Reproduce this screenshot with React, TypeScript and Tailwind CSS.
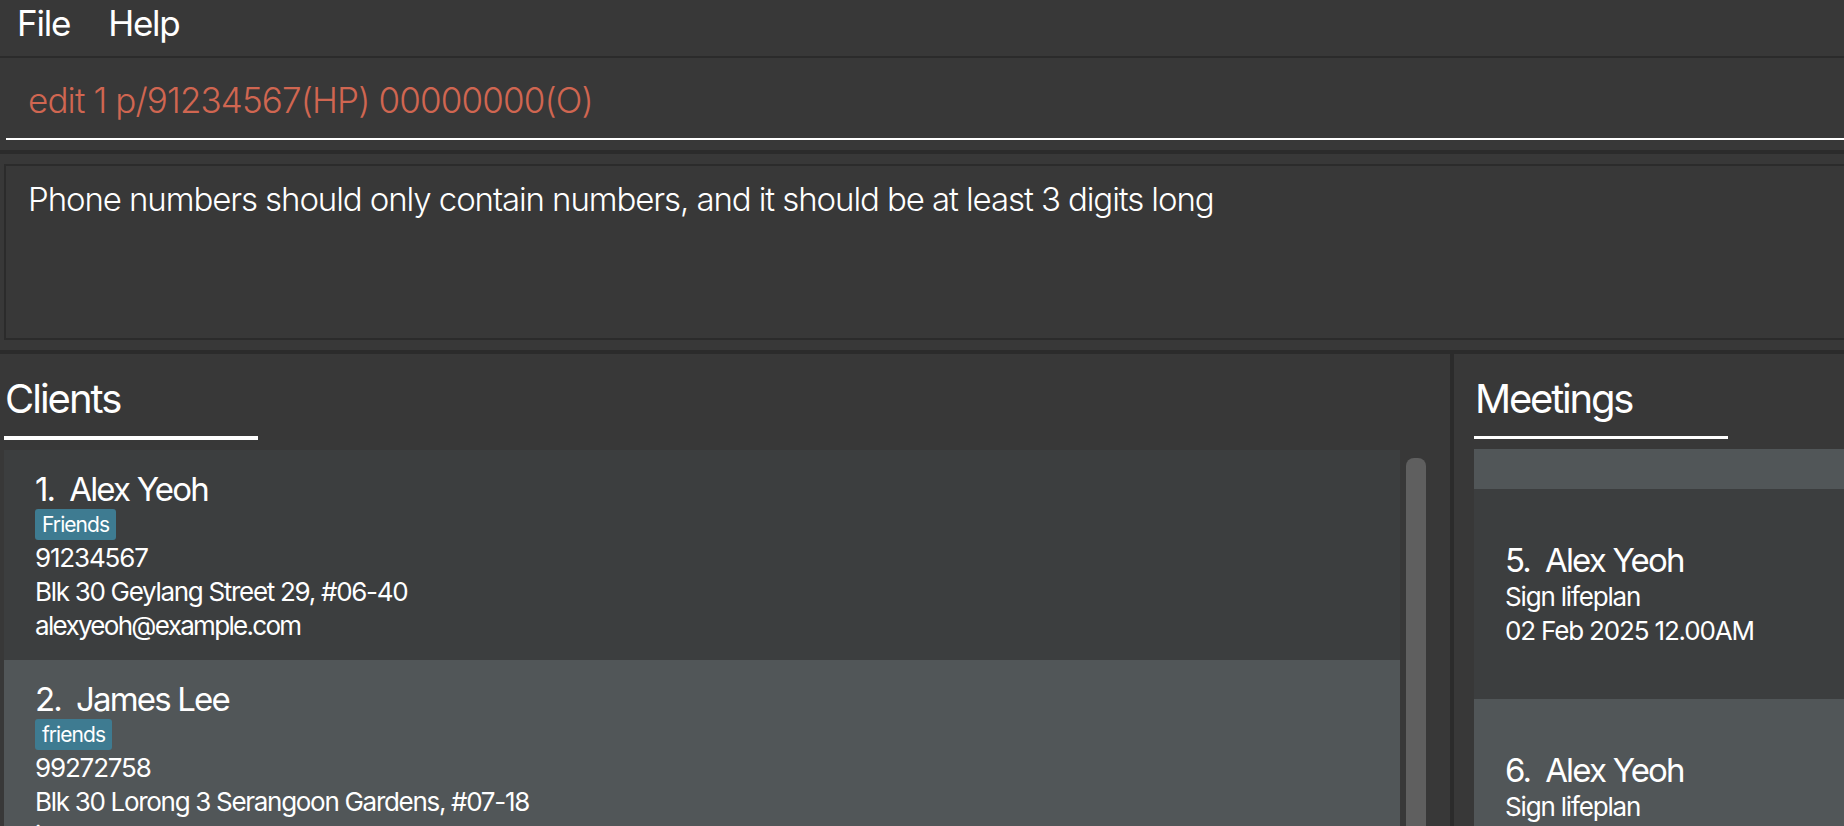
import React from 'react';

type Client = {
  index: number;
  name: string;
  tag: string;
  phone: string;
  address: string;
  email: string;
};

const clients: Client[] = [
  { index: 1, name: 'Alex Yeoh', tag: 'Friends', phone: '91234567', address: 'Blk 30 Geylang Street 29, #06-40', email: 'alexyeoh@example.com' },
  { index: 2, name: 'James Lee', tag: 'friends', phone: '99272758', address: 'Blk 30 Lorong 3 Serangoon Gardens, #07-18', email: 'jameslee@example.com' },
];

const meetings = [
  { index: 5, name: 'Alex Yeoh', title: 'Sign lifeplan', when: '02 Feb 2025 12.00AM' },
  { index: 6, name: 'Alex Yeoh', title: 'Sign lifeplan', when: '02 Feb 2025 12.00AM' },
];

function ClientCard({ c, odd }: { c: Client; odd: boolean }) {
  return (
    <div className={`h-[210px] shrink-0 pl-[31px] pt-[19px] ${odd ? 'bg-[#515658]' : 'bg-[#3c3e3f]'}`}>
      <div className="text-[33px] leading-[40px] tracking-[-0.055em] whitespace-pre">{`${c.index}.  ${c.name}`}</div>
      <div className="flex">
        <span className="h-[31px] px-[7px] rounded-[3px] bg-[#3e7b91] text-[21px] leading-[31px] tracking-[-0.045em]">{c.tag}</span>
      </div>
      <div className="text-[26px] leading-[34px] tracking-[-0.045em] mt-[1px]">{c.phone}</div>
      <div className="text-[26px] leading-[34px] tracking-[-0.05em]">{c.address}</div>
      <div className="text-[26px] leading-[34px] tracking-[-0.065em]">{c.email}</div>
    </div>
  );
}

function MeetingCard({ m, odd }: { m: (typeof meetings)[number]; odd: boolean }) {
  return (
    <div className={`h-[210px] shrink-0 pl-[31px] flex flex-col justify-center ${odd ? 'bg-[#515658]' : 'bg-[#3c3e3f]'}`}>
      <div className="text-[33px] leading-[40px] tracking-[-0.055em] whitespace-pre">{`${m.index}.  ${m.name}`}</div>
      <div className="text-[26px] leading-[34px] tracking-[-0.045em]">{m.title}</div>
      <div className="text-[26px] leading-[34px] tracking-[-0.045em]">{m.when}</div>
    </div>
  );
}

export default function App() {
  return (
    <div className="w-[1844px] h-[826px] overflow-hidden flex flex-col bg-[#383838] text-white font-['Inter','Liberation_Sans',sans-serif]">
      {/* Menu bar */}
      <div className="h-[56px] shrink-0 flex gap-[38px] pl-[17px] text-[35px] leading-[46px] tracking-[-0.035em]">
        <span>File</span>
        <span>Help</span>
      </div>
      <div className="h-[2px] shrink-0 bg-[#2b2b2b]" />

      {/* Command box */}
      <div className="shrink-0 pl-[6px] pb-[10px]">
        <div className="h-[82px] border-b-2 border-white pl-[22px] pt-[20px] text-[35px] leading-[44px] font-light tracking-[-0.025em] text-[#d06651]">
          edit 1 p/91234567(HP) 00000000(O)
        </div>
      </div>
      <div className="h-[4px] shrink-0 bg-[#2b2b2b]" />

      {/* Result display */}
      <div className="shrink-0 pl-[4px] py-[10px]">
        <div className="h-[176px] border-2 border-r-0 border-[#2b2b2b] pl-[22px] pt-[12px] text-[33px] leading-[42px] font-light tracking-[-0.033em]">
          Phone numbers should only contain numbers, and it should be at least 3 digits long
        </div>
      </div>
      <div className="h-[4px] shrink-0 bg-[#2b2b2b]" />

      {/* Panels */}
      <div className="flex-1 flex min-h-0">
        {/* Clients */}
        <div className="w-[1450px] shrink-0 flex flex-col pl-[4px] min-h-0">
          <div className="pt-[21px] pl-[1px] text-[40px] leading-[48px] tracking-[-0.05em]">Clients</div>
          <div className="mt-[13px] w-[254px] h-[4px] bg-white" />
          <div className="mt-[10px] flex flex-1 min-h-0">
            <div className="w-[1396px] flex flex-col overflow-hidden">
              {clients.map((c, i) => (
                <ClientCard key={c.index} c={c} odd={i % 2 === 1} />
              ))}
            </div>
            <div className="ml-[6px] mt-[8px] w-[20px] h-[600px] rounded-[8px] bg-[#5f5f5f]" />
          </div>
        </div>

        <div className="w-[4px] shrink-0 bg-[#2b2b2b]" />

        {/* Meetings */}
        <div className="flex-1 flex flex-col pl-[20px] min-h-0">
          <div className="pt-[21px] pl-[1px] text-[40px] leading-[48px] tracking-[-0.055em]">Meetings</div>
          <div className="mt-[13px] w-[254px] h-[4px] bg-white" />
          <div className="mt-[10px] flex flex-col overflow-hidden">
            <div className="h-[40px] shrink-0 bg-[#515658]" />
            {meetings.map((m, i) => (
              <MeetingCard key={m.index} m={m} odd={i % 2 === 1} />
            ))}
          </div>
        </div>
      </div>
    </div>
  );
}
